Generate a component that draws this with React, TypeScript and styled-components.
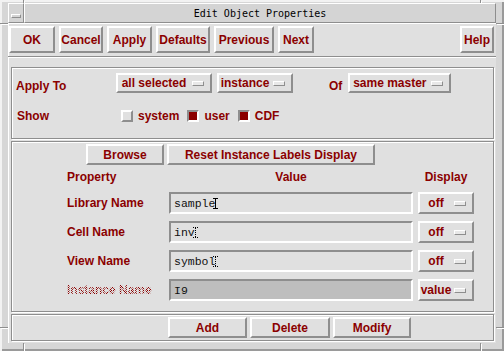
import { Fragment } from 'react';
import styled, { createGlobalStyle, css } from 'styled-components';

const TEXT = '#8b0000';
const BG = '#e0e0e0';
const FRAME = '#d6d6d6';
const SHADOW = '#8e8e8e';
const LIGHT = '#ffffff';

const GlobalStyle = createGlobalStyle`
  html, body {
    margin: 0;
    padding: 0;
    background: ${FRAME};
  }
  body {
    font-family: "Liberation Sans", Arial, sans-serif;
  }
  * {
    box-sizing: border-box;
  }
`;

const raised = css`
  border-style: solid;
  border-width: 2px;
  border-color: ${LIGHT} ${SHADOW} ${SHADOW} ${LIGHT};
`;

const sunken = css`
  border-style: solid;
  border-width: 2px;
  border-color: ${SHADOW} ${LIGHT} ${LIGHT} ${SHADOW};
`;

const Window = styled.div`
  position: relative;
  width: 504px;
  height: 351px;
  display: flex;
  flex-direction: column;
  padding: 3px 8px 8px;
  background: ${FRAME};
  box-shadow: inset 2px 2px 0 #f2f2f2, inset -2px -2px 0 #9a9a9a;
`;

type TickProps = { $side: 'top' | 'bottom' | 'left' | 'right'; $at: number };

const Tick = styled.span<TickProps>`
  position: absolute;
  background: ${SHADOW};
  box-shadow: 1px 1px 0 ${LIGHT};
  ${({ $side, $at }) => {
    if ($side === 'top') return css`top: 0; left: ${$at}px; width: 1px; height: 3px;`;
    if ($side === 'bottom') return css`bottom: 0; left: ${$at}px; width: 1px; height: 8px;`;
    if ($side === 'left') return css`left: 0; top: ${$at}px; width: 8px; height: 1px;`;
    return css`right: 0; top: ${$at}px; width: 8px; height: 1px;`;
  }}
`;

const TitleRow = styled.div`
  display: flex;
  height: 20px;
`;

const MenuButton = styled.div`
  width: 16px;
  display: flex;
  justify-content: center;
  padding-top: 10px;
  background: #d4d4d4;
  border-style: solid;
  border-width: 1px;
  border-color: ${LIGHT} ${SHADOW} ${SHADOW} ${LIGHT};
`;

const MenuGlyph = styled.span`
  width: 10px;
  height: 4px;
  border-style: solid;
  border-width: 1px;
  border-color: ${LIGHT} ${SHADOW} ${SHADOW} ${LIGHT};
`;

const TitleBar = styled.div`
  flex: 1;
  background: #d4d4d4;
  border-style: solid;
  border-width: 1px;
  border-color: ${LIGHT} ${SHADOW} ${SHADOW} ${LIGHT};
  font-family: "DejaVu Sans Mono", "Liberation Mono", monospace;
  font-size: 10px;
  line-height: 18px;
  padding-top: 1px;
  color: #000;
  text-align: center;
`;

const Dialog = styled.div`
  flex: 1;
  display: flex;
  flex-direction: column;
  background: ${BG};
  box-shadow: inset 1px 1px 0 ${LIGHT};
`;

const Toolbar = styled.div`
  display: flex;
  align-items: flex-start;
  gap: 4px;
  height: 34px;
  padding: 3px 2px 0 1px;
  border-bottom: 1px solid ${SHADOW};
  box-shadow: 0 1px 0 ${LIGHT};
`;

const Button = styled.button<{ $w: number; $h?: number; $push?: boolean }>`
  ${raised};
  width: ${({ $w }) => $w}px;
  height: ${({ $h }) => $h ?? 27}px;
  margin-left: ${({ $push }) => ($push ? 'auto' : '0')};
  padding: 0;
  background: ${BG};
  color: ${TEXT};
  font-family: "Liberation Sans", Arial, sans-serif;
  font-weight: 700;
  font-size: 12px;
  text-align: center;
  cursor: pointer;
`;

const Body = styled.div`
  flex: 1;
  display: flex;
  flex-direction: column;
  gap: 2px;
  padding: 10px 2px 2px 3px;
`;

const Panel = styled.div<{ $h: number }>`
  height: ${({ $h }) => $h}px;
  border: 1px solid ${SHADOW};
  box-shadow: inset 1px 1px 0 ${LIGHT}, 1px 1px 0 ${LIGHT};
`;

const ApplyPanel = styled(Panel)`
  padding: 5px 0 0 4px;
`;

const Row = styled.div<{ $top?: number }>`
  display: flex;
  align-items: flex-end;
  height: 20px;
  margin-top: ${({ $top }) => $top ?? 0}px;
`;

const Label = styled.span<{ $w?: number; $lead?: number }>`
  width: ${({ $w }) => ($w ? `${$w}px` : 'auto')};
  margin-left: ${({ $lead }) => $lead ?? 0}px;
  color: ${TEXT};
  font-weight: 700;
  font-size: 12px;
  line-height: 14px;
  white-space: nowrap;
`;

const ShowLabel = styled(Label)`
  align-self: center;
  padding-left: 1px;
`;

const Option = styled.div<{ $w: number; $h?: number; $gap?: number }>`
  ${raised};
  display: flex;
  align-items: center;
  width: ${({ $w }) => $w}px;
  height: ${({ $h }) => $h ?? 20}px;
  margin-left: ${({ $gap }) => $gap ?? 0}px;
  background: ${BG};
  color: ${TEXT};
  font-weight: 700;
  font-size: 12px;
`;

const OptionText = styled.span`
  flex: 1;
  text-align: center;
  white-space: nowrap;
  overflow: hidden;
`;

const Indicator = styled.span`
  flex: none;
  width: 12px;
  height: 5px;
  margin: 0 6px 0 2px;
  background: #e8e8e8;
  border-style: solid;
  border-width: 1px;
  border-color: ${LIGHT} ${SHADOW} ${SHADOW} ${LIGHT};
`;

const Checks = styled.div`
  display: flex;
  align-items: center;
  gap: 8px;
  height: 20px;
`;

const CheckItem = styled.label`
  display: flex;
  align-items: center;
  gap: 5px;
  color: ${TEXT};
  font-weight: 700;
  font-size: 12px;
`;

const Box = styled.span<{ $on?: boolean }>`
  width: 12px;
  height: 12px;
  ${({ $on }) => ($on ? sunken : raised)};
  background: ${({ $on }) => ($on ? TEXT : BG)};
`;

const PropsPanel = styled(Panel)`
  padding: 2px 0 0 0;
`;

const ButtonRow = styled.div<{ $lead: number }>`
  display: flex;
  gap: 3px;
  padding-left: ${({ $lead }) => $lead}px;
`;

const Grid = styled.div`
  display: grid;
  grid-template-columns: 97px 244px 56px;
  grid-template-rows: 15px;
  grid-auto-rows: 22px;
  column-gap: 5px;
  row-gap: 7px;
  margin-top: 5px;
  padding-left: 55px;
  align-items: center;
`;

const Head = styled.span<{ $center?: boolean }>`
  color: ${TEXT};
  font-weight: 700;
  font-size: 12px;
  line-height: 15px;
  text-align: ${({ $center }) => ($center ? 'center' : 'left')};
`;

const RowLabel = styled.span<{ $disabled?: boolean }>`
  font-weight: 700;
  font-size: 12px;
  line-height: 15px;
  white-space: nowrap;
  color: ${TEXT};
  ${({ $disabled }) =>
    $disabled &&
    css`
      color: transparent;
      background-image: repeating-conic-gradient(${TEXT} 0% 25%, transparent 0% 50%);
      background-size: 2px 2px;
      -webkit-background-clip: text;
      background-clip: text;
    `}
`;

const Field = styled.div<{ $disabled?: boolean }>`
  ${sunken};
  height: 22px;
  display: flex;
  align-items: center;
  padding-left: 3px;
  background: ${({ $disabled }) => ($disabled ? '#bebebe' : BG)};
  font-family: "Liberation Mono", "DejaVu Sans Mono", monospace;
  font-size: 11.5px;
  color: #111;
  white-space: pre;
`;

const Caret = styled.span<{ $active?: boolean }>`
  display: inline-block;
  width: 5px;
  height: 11px;
  margin-left: -2px;
  border-top: 1px ${({ $active }) => ($active ? 'solid' : 'dotted')} #000;
  border-bottom: 1px ${({ $active }) => ($active ? 'solid' : 'dotted')} #000;
  background: ${({ $active }) =>
    $active
      ? 'linear-gradient(#000, #000) center / 1px 100% no-repeat'
      : 'repeating-linear-gradient(#000 0 1px, transparent 1px 2px) center / 1px 100% no-repeat'};
`;

const ActionPanel = styled(Panel)`
  padding-top: 2px;
`;

type PropRow = {
  name: string;
  value: string;
  display: string;
  caret?: 'active' | 'idle';
  disabled?: boolean;
};

const rows: PropRow[] = [
  { name: 'Library Name', value: 'sample', display: 'off', caret: 'active' },
  { name: 'Cell Name', value: 'inv', display: 'off', caret: 'idle' },
  { name: 'View Name', value: 'symbol', display: 'off', caret: 'idle' },
  { name: 'Instance Name', value: 'I9', display: 'value', disabled: true },
];

const topButtons = [
  { label: 'OK', w: 46 },
  { label: 'Cancel', w: 44 },
  { label: 'Apply', w: 45 },
  { label: 'Defaults', w: 54 },
  { label: 'Previous', w: 60 },
  { label: 'Next', w: 36 },
];

export default function App() {
  return (
    <>
      <GlobalStyle />
      <Window>
        <Tick $side='top' $at={23} />
        <Tick $side='top' $at={480} />
        <Tick $side='left' $at={23} />
        <Tick $side='left' $at={327} />
        <Tick $side='right' $at={23} />
        <Tick $side='right' $at={327} />
        <Tick $side='bottom' $at={23} />
        <Tick $side='bottom' $at={480} />

        <TitleRow>
          <MenuButton>
            <MenuGlyph />
          </MenuButton>
          <TitleBar>Edit Object Properties</TitleBar>
        </TitleRow>

        <Dialog>
          <Toolbar>
            {topButtons.map((b) => (
              <Button key={b.label} $w={b.w}>
                {b.label}
              </Button>
            ))}
            <Button $w={34} $push>
              Help
            </Button>
          </Toolbar>

          <Body>
            <ApplyPanel $h={72}>
              <Row>
                <Label $w={100}>Apply To</Label>
                <Option $w={96}>
                  <OptionText>all selected</OptionText>
                  <Indicator />
                </Option>
                <Option $w={76} $gap={5}>
                  <OptionText>instance</OptionText>
                  <Indicator />
                </Option>
                <Label $lead={36}>Of</Label>
                <Option $w={103} $gap={6}>
                  <OptionText>same master</OptionText>
                  <Indicator />
                </Option>
              </Row>
              <Row $top={13}>
                <ShowLabel $w={105}>Show</ShowLabel>
                <Checks>
                  <CheckItem>
                    <Box />
                    system
                  </CheckItem>
                  <CheckItem>
                    <Box $on />
                    user
                  </CheckItem>
                  <CheckItem>
                    <Box $on />
                    CDF
                  </CheckItem>
                </Checks>
              </Row>
            </ApplyPanel>

            <PropsPanel $h={171}>
              <ButtonRow $lead={74}>
                <Button $w={78} $h={21}>
                  Browse
                </Button>
                <Button $w={208} $h={21}>
                  Reset Instance Labels Display
                </Button>
              </ButtonRow>
              <Grid>
                <Head>Property</Head>
                <Head $center>Value</Head>
                <Head $center>Display</Head>
                {rows.map((r) => (
                  <Fragment key={r.name}>
                    <RowLabel $disabled={r.disabled}>{r.name}</RowLabel>
                    <Field $disabled={r.disabled}>
                      {r.value}
                      {r.caret && <Caret $active={r.caret === 'active'} />}
                    </Field>
                    <Option $w={56} $h={22}>
                      <OptionText>{r.display}</OptionText>
                      <Indicator />
                    </Option>
                  </Fragment>
                ))}
              </Grid>
            </PropsPanel>

            <ActionPanel $h={27}>
              <ButtonRow $lead={156}>
                <Button $w={79} $h={21}>
                  Add
                </Button>
                <Button $w={80} $h={21}>
                  Delete
                </Button>
                <Button $w={78} $h={21}>
                  Modify
                </Button>
              </ButtonRow>
            </ActionPanel>
          </Body>
        </Dialog>
      </Window>
    </>
  );
}
